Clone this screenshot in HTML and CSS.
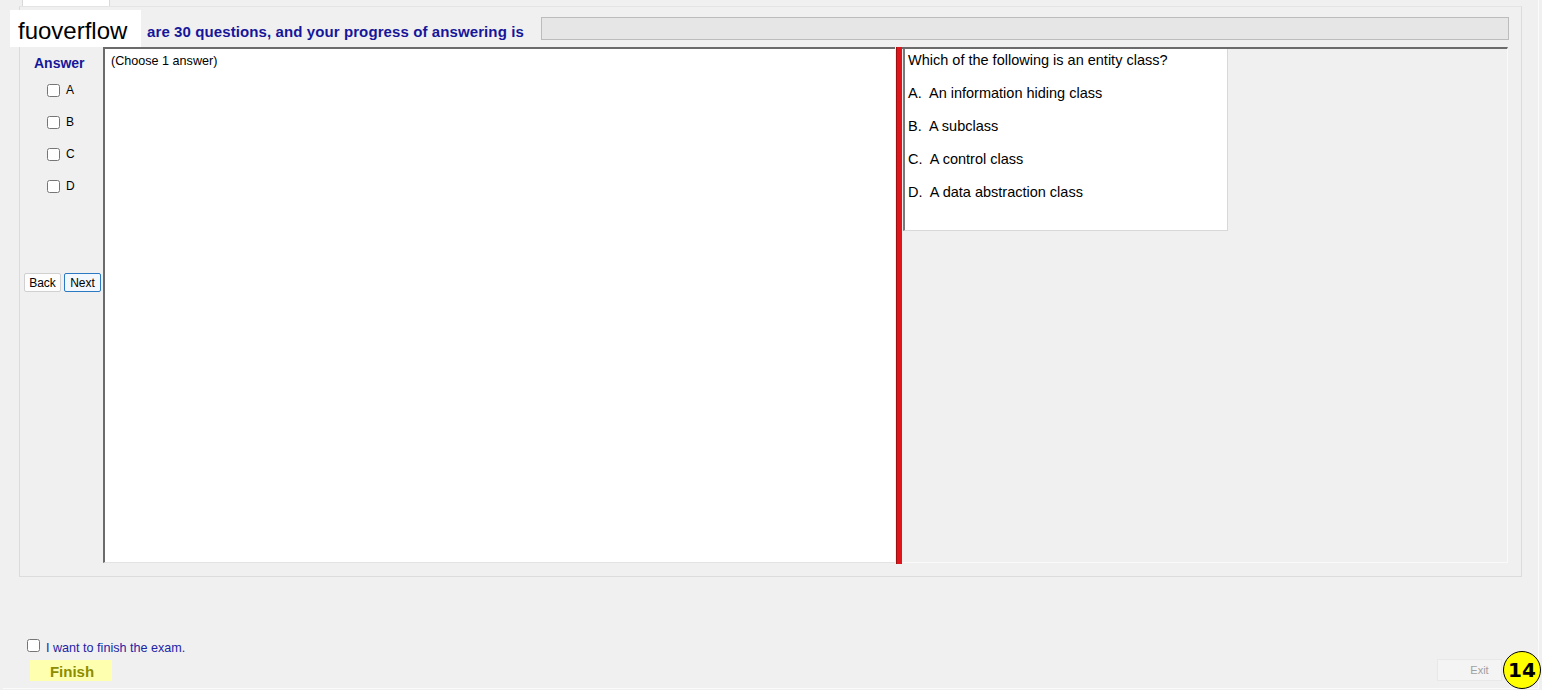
FILE: index.html
```
<!DOCTYPE html>
<html lang="en">
<head>
    <meta charset="UTF-8">
    <meta name="viewport" content="width=device-width, initial-scale=1.0">
    <title>Exam</title>
    <link rel="stylesheet" href="styles.css">
</head>
<body>
    <div class="window">
        <div class="tabs"><div class="tab"></div></div>

        <div class="tab-panel">
            <div class="header">
                <span class="intro">are 30 questions, and your progress of answering is</span>
                <div class="progress"></div>
            </div>

            <div class="content">
                <div class="answers">
                    <div class="answers-title">Answer</div>
                    <label class="option"><input type="checkbox"> A</label>
                    <label class="option"><input type="checkbox"> B</label>
                    <label class="option"><input type="checkbox"> C</label>
                    <label class="option"><input type="checkbox"> D</label>
                    <div class="nav">
                        <button class="btn">Back</button>
                        <button class="btn focused">Next</button>
                    </div>
                </div>

                <div class="notes">(Choose 1 answer)</div>
                <div class="splitter"></div>

                <div class="question-pane">
                    <div class="question">
                        <p>Which of the following is an entity class?</p>
                        <p>A.&nbsp; An information hiding class</p>
                        <p>B.&nbsp; A subclass</p>
                        <p>C.&nbsp; A control class</p>
                        <p>D.&nbsp; A data abstraction class</p>
                    </div>
                </div>
            </div>
        </div>

        <div class="footer">
            <div class="finish-box">
                <label class="finish-check"><input type="checkbox"> <span>I want to finish the exam.</span></label>
                <button class="finish">Finish</button>
            </div>
            <button class="exit">Exit</button>
        </div>
    </div>

    <div class="brand">fuoverflow</div>
    <div class="badge">14</div>
</body>
</html>
```

FILE: styles.css
```
:root {
    --bg-color: #f0f0f0;
    --navy: #16169a;
    --edge: #6b6b6b;
    --line: #dcdcdc;
}

* {
    box-sizing: border-box;
}

body {
    margin: 0;
    height: 690px;
    overflow: hidden;
    background-color: var(--bg-color);
    font-family: 'Liberation Sans', Arial, sans-serif;
    color: #000;
}

.window {
    margin-left: 3px;
    width: 1536px;
    height: 689px;
    border-right: 1px solid #fbfbfb;
    border-bottom: 1px solid #fbfbfb;
    display: flex;
    flex-direction: column;
}

.tabs {
    height: 6px;
    padding-left: 19px;
}

.tab {
    width: 88px;
    height: 6px;
    background-color: #fff;
    border: 1px solid #d9d9d9;
    border-top: none;
    border-bottom: none;
}

.tab-panel {
    margin-left: 16px;
    width: 1503px;
    height: 571px;
    border: 1px solid var(--line);
    border-top-color: #e4e4e4;
}

.header {
    display: flex;
    height: 23px;
    margin: 10px 12px 7px 0;
}

.intro {
    padding-left: 127px;
    padding-top: 6px;
    font-size: 15px;
    letter-spacing: 0.1px;
    font-weight: bold;
    color: var(--navy);
}

.progress {
    margin-left: auto;
    width: 968px;
    height: 23px;
    background-color: #e6e6e6;
    border: 1px solid #bcbcbc;
}

.content {
    display: flex;
    margin-left: 2px;
    width: 1486px;
    height: 516px;
}

.answers {
    width: 81px;
    padding-top: 8px;
}

.answers-title {
    padding-left: 12px;
    font-size: 14px;
    line-height: 16px;
    font-weight: bold;
    color: var(--navy);
    margin-bottom: 3px;
}

.option {
    display: flex;
    align-items: center;
    gap: 6px;
    height: 32px;
    padding-left: 25px;
    font-size: 12px;
}

.option input,
.finish-check input {
    margin: 0;
    width: 13px;
    height: 13px;
}

.nav {
    display: flex;
    gap: 3px;
    margin-top: 71px;
    padding-left: 2px;
}

.btn {
    width: 37px;
    height: 19px;
    padding: 0;
    font-family: inherit;
    font-size: 12px;
    color: #000;
    background-color: #fdfdfd;
    border: 1px solid #d0d0d0;
    border-radius: 2px;
}

.btn.focused {
    background-color: #f2f8fd;
    border-color: #2a79c2;
}

.notes {
    width: 792px;
    height: 516px;
    padding: 5px 6px;
    background-color: #fff;
    border-top: 2px solid var(--edge);
    border-left: 2px solid var(--edge);
    border-bottom: 1px solid #e3e3e3;
    font-size: 12.6px;
    line-height: 14px;
}

.splitter {
    width: 6px;
    height: 517px;
    margin-left: 1px;
    background-color: #e0141b;
    border-left: 1px solid #9a1010;
}

.question-pane {
    flex: 1;
    border-top: 2px solid var(--edge);
    border-right: 1px solid #fafafa;
    border-bottom: 1px solid #fafafa;
}

.question {
    margin-left: 1px;
    width: 325px;
    height: 182px;
    padding: 1px 0 0 3px;
    background-color: #fff;
    border-left: 2px solid #7a7a7a;
    border-right: 1px solid #d8d8d8;
    border-bottom: 1px solid #d8d8d8;
    font-size: 14.5px;
}

.question p {
    margin: 0 0 13px;
    line-height: 20px;
}

.footer {
    flex: 1;
    display: flex;
    align-items: flex-end;
    padding: 0 36px 7px 24px;
}

.finish-check {
    display: flex;
    align-items: center;
    gap: 6px;
    font-size: 12.6px;
    color: #2323a6;
}

.finish-check span {
    padding-top: 6px;
}

.finish {
    display: block;
    margin: 5px 0 0 3px;
    width: 82px;
    height: 21px;
    padding: 2px 0 0 2px;
    font-family: inherit;
    font-size: 15px;
    font-weight: bold;
    color: #8d8d00;
    background-color: #ffffb0;
    border: none;
}

.exit {
    margin-left: auto;
    width: 65px;
    height: 22px;
    padding: 0 0 0 20px;
    font-family: inherit;
    font-size: 11px;
    color: #a0a0a0;
    background-color: #f4f4f4;
    border: 1px solid #e8e8e8;
}

.brand {
    position: absolute;
    left: 10px;
    top: 10px;
    width: 131px;
    height: 37px;
    padding: 7px 0 0 8px;
    background-color: #fff;
    font-size: 24px;
    line-height: 28px;
}

.badge {
    position: absolute;
    left: 1503px;
    top: 651px;
    width: 38px;
    height: 38px;
    border-radius: 50%;
    background-color: #ffff00;
    border: 1.5px solid #000;
    display: flex;
    align-items: center;
    justify-content: center;
    font-family: 'DejaVu Sans', sans-serif;
    font-size: 20px;
    font-weight: bold;
}
```
